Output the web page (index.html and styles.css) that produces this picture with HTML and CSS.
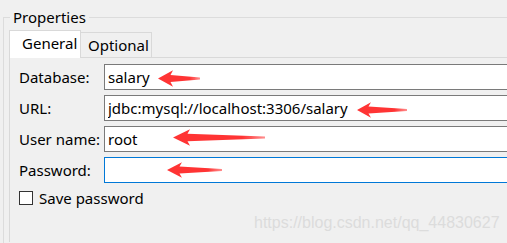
FILE: index.html
```html
<!DOCTYPE html>
<html lang="en">
<head>
    <meta charset="UTF-8">
    <meta name="viewport" content="width=device-width, initial-scale=1.0">
    <title>Properties</title>
    <link rel="stylesheet" href="styles.css">
</head>
<body>
    <fieldset class="group">
        <legend>Properties</legend>
        <div class="tabs">
            <div class="tab active">General</div>
            <div class="tab">Optional</div>
        </div>
        <div class="panel">
            <form class="form">
                <label for="db">Database:</label>
                <input type="text" id="db" value="salary">

                <label for="url">URL:</label>
                <input type="text" id="url" value="jdbc:mysql://localhost:3306/salary">

                <label for="user">User name:</label>
                <input type="text" id="user" value="root">

                <label for="pass">Password:</label>
                <input type="password" id="pass" class="focused">
            </form>
            <label class="check"><span class="box"></span>Save password</label>
        </div>
    </fieldset>

    <div class="watermark">https://blog.csdn.net/qq_44830627</div>

    <!-- red annotation arrows -->
    <svg class="arrow arrow-db" width="42" height="17" viewBox="0 0 42 17">
        <defs>
            <linearGradient id="fade" x1="0" y1="0" x2="1" y2="0">
                <stop offset="0" stop-color="#ff3434"/>
                <stop offset="0.75" stop-color="#ff3434"/>
                <stop offset="1" stop-color="#ff3434" stop-opacity="0.55"/>
            </linearGradient>
        </defs>
        <polygon points="0,8.5 15,0.3 12.5,5 42,7.6 42,9.4 12.5,12 15,16.7" fill="url(#fade)"/>
    </svg>
    <svg class="arrow arrow-url" width="50" height="16" viewBox="0 0 50 16">
        <polygon points="0,8 14,0.3 11.5,4.6 50,7.1 50,8.9 11.5,11.4 14,15.7" fill="url(#fade)"/>
    </svg>
    <svg class="arrow arrow-user" width="92" height="17" viewBox="0 0 92 17">
        <polygon points="0,8.5 17,0.3 14.5,4.8 92,7.6 92,9.4 14.5,12.2 17,16.7" fill="url(#fade)"/>
    </svg>
    <svg class="arrow arrow-pass" width="55" height="16" viewBox="0 0 55 16">
        <polygon points="0,8 15,0.3 12.5,4.6 55,7.1 55,8.9 12.5,11.4 15,15.7" fill="url(#fade)"/>
    </svg>
</body>
</html>
```

FILE: styles.css
```css
html, body {
    margin: 0;
    padding: 0;
    overflow: hidden;
}
body {
    font-family: "Noto Sans", "Open Sans", sans-serif;
    font-size: 15px;
    line-height: 20px;
    color: #000;
    background-color: #f0f0f0;
    width: 507px;
    height: 243px;
}
.group {
    margin: 7px 0 0 3px;
    padding: 3px 0 0 5px;
    border: 1px solid #dcdcdc;
    border-right: none;
    border-bottom: none;
    width: 504px;
    height: 236px;
    box-sizing: border-box;
    min-width: 0;
}
.group legend {
    padding: 0 3px;
    margin-left: 1px;
    line-height: 20px;
}
.tabs {
    display: flex;
    align-items: flex-end;
}
.tab {
    box-sizing: border-box;
    height: 25px;
    width: 71px;
    padding: 2px 0 0 7px;
    border: 1px solid #d9d9d9;
    border-left: none;
    border-bottom: none;
    background-color: #f0f0f0;
}
.tab.active {
    position: relative;
    z-index: 1;
    height: 28px;
    width: 72px;
    padding-left: 12px;
    margin-bottom: -1px;
    border-left: 1px solid #d9d9d9;
    background-color: #fff;
}
.panel {
    border-top: 1px solid #d9d9d9;
    border-left: 1px solid #d9d9d9;
    padding: 6px 0 0 9px;
    height: 178px;
}
.form {
    display: grid;
    grid-template-columns: 85px 1fr;
    row-gap: 5px;
    align-items: center;
    margin: 0;
}
.form input {
    box-sizing: border-box;
    width: 100%;
    min-width: 0;
    height: 26px;
    margin: 0;
    padding: 0 3px;
    border: 1px solid #7a7a7a;
    border-right: none;
    border-radius: 0;
    background-color: #fff;
    font-family: inherit;
    font-size: 15px;
    color: #000;
    outline: none;
}
.form input.focused {
    border-color: #0078d7;
}
.check {
    display: flex;
    align-items: center;
    gap: 6px;
    margin-top: 5px;
}
.check .box {
    box-sizing: border-box;
    width: 14px;
    height: 14px;
    border: 1px solid #333;
    background-color: #fff;
}
.watermark {
    position: absolute;
    left: 254px;
    top: 214px;
    font-family: "Liberation Sans", Arial, sans-serif;
    font-size: 16px;
    line-height: 18px;
    color: #dcdcdc;
    white-space: nowrap;
}
.arrow {
    position: absolute;
}
.arrow-db { left: 158px; top: 70px; }
.arrow-url { left: 357px; top: 102px; }
.arrow-user { left: 173px; top: 129px; }
.arrow-pass { left: 167px; top: 162px; }
```
